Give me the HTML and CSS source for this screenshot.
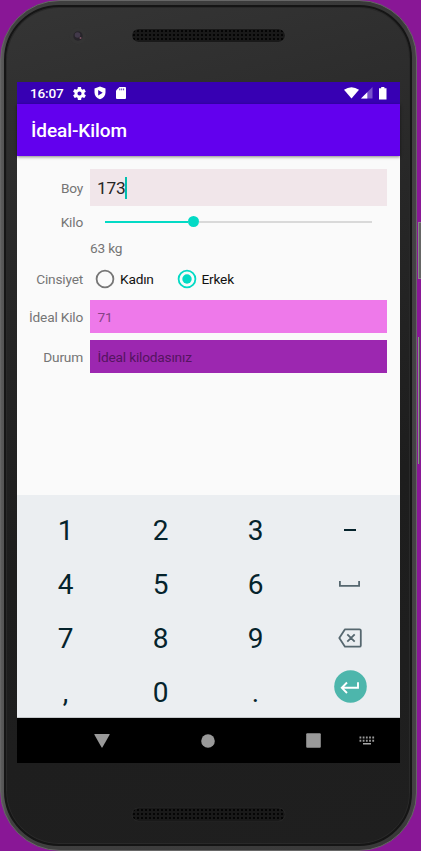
FILE: index.html
```
<!DOCTYPE html>
<html lang="tr">
<head>
<meta charset="utf-8">
<title>İdeal-Kilom</title>
<link rel="stylesheet" href="styles.css">
</head>
<body>
<div class="phone">
  <div class="body">
    <div class="top">
      <svg class="camera" width="18" height="18" viewBox="0 0 18 18"><circle cx="9" cy="9" r="8.3" fill="#343434"/><circle cx="9" cy="9" r="4.7" fill="#27242a"/><circle cx="8.5" cy="8" r="2.8" fill="#42394a"/><circle cx="11.5" cy="11" r="1" fill="#805565"/></svg>
      <div class="speaker"></div>
    </div>
    <main class="screen">
      <div class="status">
        <span class="time">16:07</span>
        <svg class="gear" width="13" height="13" viewBox="2 2 20 20"><path fill="#fff" fill-rule="evenodd" d="M19.4 13c.1-.7.1-1.3 0-2l2.1-1.6c.2-.2.2-.4.1-.6l-2-3.5c-.1-.2-.4-.3-.6-.2l-2.5 1c-.5-.4-1.1-.7-1.7-1l-.4-2.6c0-.3-.2-.5-.5-.5h-4c-.3 0-.5.2-.5.5L9 5.100c-.6.3-1.100.6-1.700 1l-2.500-1c-.2-.1-.5 0-.6.2l-2 3.500c-.1.2-.1.5.1.600L4.500 11c-.1.700-.1 1.300 0 2l-2.100 1.600c-.2.200-.3.400-.1.600l2 3.500c.1.200.4.300.6.200l2.500-1c.5.400 1.100.7 1.700 1l.4 2.600c0 .300.2.500.5.500h4c.3 0 .5-.2.500-.5l.4-2.600c.6-.3 1.200-.6 1.700-1l2.500 1c.2.100.5 0 .6-.2l2-3.500c.1-.2.1-.5-.1-.6zM12 15.200a3.200 3.200 0 1 1 0-6.400 3.200 3.200 0 0 1 0 6.400z"/></svg>
        <svg class="shield" width="12" height="14" viewBox="0 0 12 14"><path fill="#fff" fill-rule="evenodd" d="M6 .5 11.500 2.500V6.500C11.500 9.800 9.300 12.200 6 13.300 2.700 12.200.5 9.800.5 6.500V2.500zM4.200 4V9.400L8.700 6.700z"/></svg>
        <svg class="sd" width="10" height="12" viewBox="0 0 10 12"><path fill="#fff" d="M3.500 0H9q1 0 1 1V11q0 1-1 1H1q-1 0-1-1V3.500z"/><path stroke="#3700b3" stroke-width=".8" d="M3.800 1.500V3.300M5.700 1.500V3.300M7.600 1.500V3.300"/></svg>
        <span class="signals">
          <svg width="15" height="12" viewBox="0 0 15 12"><path fill="#fff" d="M0 2.800Q7.500-2.500 15 2.800L7.500 11.500z"/></svg>
          <svg width="12" height="12" viewBox="0 0 12 12"><path fill="#fff" opacity=".32" d="M0 11.500 11.500 0V11.500z"/><path fill="#fff" d="M0 11.500 6.300 5.200V11.500z"/></svg>
          <svg class="battery" width="8" height="13" viewBox="0 0 8 13"><path fill="#fff" d="M2.200 0H5.400V1.300H7.500V12.500H0V1.300H2.200z"/></svg>
        </span>
      </div>
      <header class="appbar"><h1>İdeal-Kilom</h1></header>
      <section class="form">
        <label class="label">Boy</label>
        <div class="field height"><span>173</span><i class="caret"></i></div>
        <label class="label kilo">Kilo</label>
        <div class="slider"><i class="track-on"></i><i class="thumb"></i><i class="track-off"></i></div>
        <div class="kg">63 kg</div>
        <label class="label cinsiyet">Cinsiyet</label>
        <div class="radios">
          <svg width="20" height="20" viewBox="0 0 20 20"><circle cx="10" cy="10" r="8.400" fill="none" stroke="#767676" stroke-width="1.800"/></svg>
          <span class="kadin">Kadın</span>
          <svg width="20" height="20" viewBox="0 0 20 20"><circle cx="10" cy="10" r="8.400" fill="none" stroke="#03dac5" stroke-width="1.800"/><circle cx="10" cy="10" r="4.700" fill="#03dac5"/></svg>
          <span>Erkek</span>
        </div>
        <label class="label">İdeal Kilo</label>
        <div class="field ideal">71</div>
        <label class="label durum">Durum</label>
        <div class="field state">İdeal kilodasınız</div>
      </section>
      <section class="keyboard">
        <span>1</span><span>2</span><span>3</span>
        <span class="action"><svg width="12" height="2" viewBox="0 0 12 2"><path fill="#05232c" d="M0 0H12V2H0z"/></svg></span>
        <span>4</span><span>5</span><span>6</span>
        <span class="action"><svg width="21" height="6" viewBox="0 0 21 6"><path fill="none" stroke="#56676f" stroke-width="1.800" d="M.9 0V4.900H20.100V0"/></svg></span>
        <span>7</span><span>8</span><span>9</span>
        <span class="action"><svg width="24" height="20" viewBox="0 0 24 20"><path fill="none" stroke="#56676f" stroke-width="1.800" stroke-linejoin="round" d="M7 1.300H21.500Q22.800 1.300 22.800 2.600V17.400Q22.800 18.700 21.500 18.700H7L1.300 10zM9.300 6.300 16.700 13.700M16.700 6.300 9.300 13.700"/></svg></span>
        <span>,</span><span>0</span><span>.</span>
        <span class="enter"><svg width="33" height="33" viewBox="0 0 33 33"><circle cx="16.500" cy="16.500" r="16.300" fill="#4db6ac"/><path fill="none" stroke="#fff" stroke-width="1.900" d="M24 12.300V17.800H8M13 12.500 7.800 17.800 13 23"/></svg></span>
      </section>
      <nav class="nav">
        <svg width="16" height="14" viewBox="0 0 16 14"><path fill="#999" d="M.8 0H15.200Q16 0 15.600.8L8.500 13.300Q8 14 7.500 13.300L.4.800Q0 0 .8 0z"/></svg>
        <svg width="14" height="14" viewBox="0 0 14 14"><circle cx="7" cy="7" r="6.800" fill="#999"/></svg>
        <svg width="15" height="15" viewBox="0 0 15 15"><rect x=".2" y=".2" width="14.600" height="14.600" rx="1" fill="#999"/></svg>
        <svg width="16" height="9" viewBox="0 0 16 9"><path fill="none" stroke="#999" stroke-width="2" stroke-dasharray="1.800 1.400" d="M.5 1.500H15.500M.5 4.800H15.500"/><path fill="#aaa" d="M4 7H12V8.500H4z"/></svg>
      </nav>
    </main>
    <div class="bottom"><div class="speaker"></div></div>
  </div>
</div>
<div class="side"><i class="power"></i><i class="volume"></i></div>
</body>
</html>
```
FILE: styles.css
```
* { box-sizing: border-box; }
body {
  margin: 0;
  width: 421px;
  height: 851px;
  overflow: hidden;
  display: flex;
  background: #891796;
  font-family: Roboto, "Noto Sans", sans-serif;
  font-size: 13.7px;
  letter-spacing: -0.2px;
  color: #757575;
}
svg { display: block; flex: none; }
i { display: block; flex: none; }
.phone {
  width: 417px;
  height: 851px;
  padding: 4px 4px 4px 3px;
  border-radius: 60px 58px 58px 60px;
  border: 1px solid #666;
  background: linear-gradient(90deg, #5c5c5c, #404040 10px, #383838 400px, #464246);
}
.body {
  height: 841px;
  border: 2px solid #151515;
  border-radius: 55px 53px 53px 55px;
  background: linear-gradient(165deg, #353535, #272727 30%, #1d1d1d 60%, #1f1f1f);
  padding: 0 9px 0 11px;
  box-shadow: inset 0 0 0 1px #292929;
}
.top { height: 75px; display: flex; padding: 20px 0 0 52px; }
.speaker {
  width: 153px;
  height: 13px;
  border-radius: 7px;
  background-color: #191919;
  background-image: radial-gradient(circle, #050505 .7px, transparent 1.3px);
  background-size: 4px 4px;
  box-shadow: 0 0 1px #444;
}
.top .speaker { margin: 2px 0 0 45px; }
.bottom { padding: 45px 0 0 115px; }
.screen { width: 383px; height: 681px; background: #fafafa; display: flex; flex-direction: column; }
.status { height: 22px; background: #3700b3; display: flex; align-items: center; padding: 0 13px 0 13px; color: #fff; }
.time { font-size: 13.6px; font-weight: 500; width: 43px; }
.shield { margin-left: 8px; }
.sd { margin-left: 10px; }
.signals { display: flex; align-items: center; margin-left: auto; gap: 2px; }
.battery { margin-left: 4px; }
.appbar { height: 52px; background: #6200ee; color: #fff; display: flex; align-items: center; padding: 1px 0 0 14px; box-shadow: 0 1px 3px #0007; }
h1 { margin: 0; font-size: 19px; font-weight: 500; letter-spacing: -0.08px; }
.form {
  flex: 1;
  padding: 13px 13px 0 0;
  display: grid;
  grid-template-columns: 66px 297px;
  grid-template-rows: 37px 31px 23px 40.4px 33px 7px 33px;
  column-gap: 7px;
  align-items: center;
  align-content: start;
}
.label { text-align: right; }
.kilo { padding-top: 1px; }
.field { height: 100%; display: flex; align-items: center; padding: 0 0 0 7.5px; }
.height { background: #f1e6ea; color: #252525; font-size: 17.3px; padding: 1px 0 0 7px; }
.caret { width: 1.5px; height: 22px; margin-left: -0.5px; background: #03bfae; }
.slider { height: 31px; padding: 0 15px; display: flex; align-items: center; }
.track-on { width: 82.5px; height: 2px; background: #03dac5; }
.thumb { width: 11px; height: 11px; border-radius: 50%; background: #03dac5; }
.track-off { flex: 1; height: 2px; background: #d9d9d9; }
.kg { grid-column: 2; padding-bottom: 2px; }
.cinsiyet { padding-bottom: 2px; }
.radios { display: flex; align-items: center; padding: 0 0 3px 5px; color: #111; }
.radios span { margin-left: 5px; }
.radios .kadin { width: 56.5px; }
.ideal { background: #ee79ea; color: #864385; }
.durum, .state { grid-row: 7; }
.state { background: #9c27b0; color: #551460; }
.keyboard {
  height: 223px;
  padding: 8px 2px 0 1px;
  display: grid;
  grid-template: repeat(4, 54px) / repeat(4, 95px);
  background: #ebeef1;
  color: #05232c;
  font-size: 28px;
  letter-spacing: 0;
  border-bottom: 1px solid #c5c8cb;
}
.keyboard span { display: flex; align-items: center; justify-content: center; }
.keyboard .action { padding-right: 2px; }
.keyboard .enter { padding: 0 1px 12px 0; }
.nav { height: 45px; background: #000; display: flex; align-items: center; padding-left: 77px; }
.nav svg:nth-child(2) { margin-left: 91px; }
.nav svg:nth-child(3) { margin-left: 91px; }
.nav svg:nth-child(4) { margin-left: 38px; }
.side { padding-top: 222px; width: 4px; }
.power { width: 3px; height: 57px; margin-left: 1px; background: #666; border: solid #888; border-width: 1px 0 1px 1px; }
.volume { width: 2px; height: 127px; margin: 58px 0 0 1px; background: #8c8c8c; border-right: 1px solid #555; }
```
